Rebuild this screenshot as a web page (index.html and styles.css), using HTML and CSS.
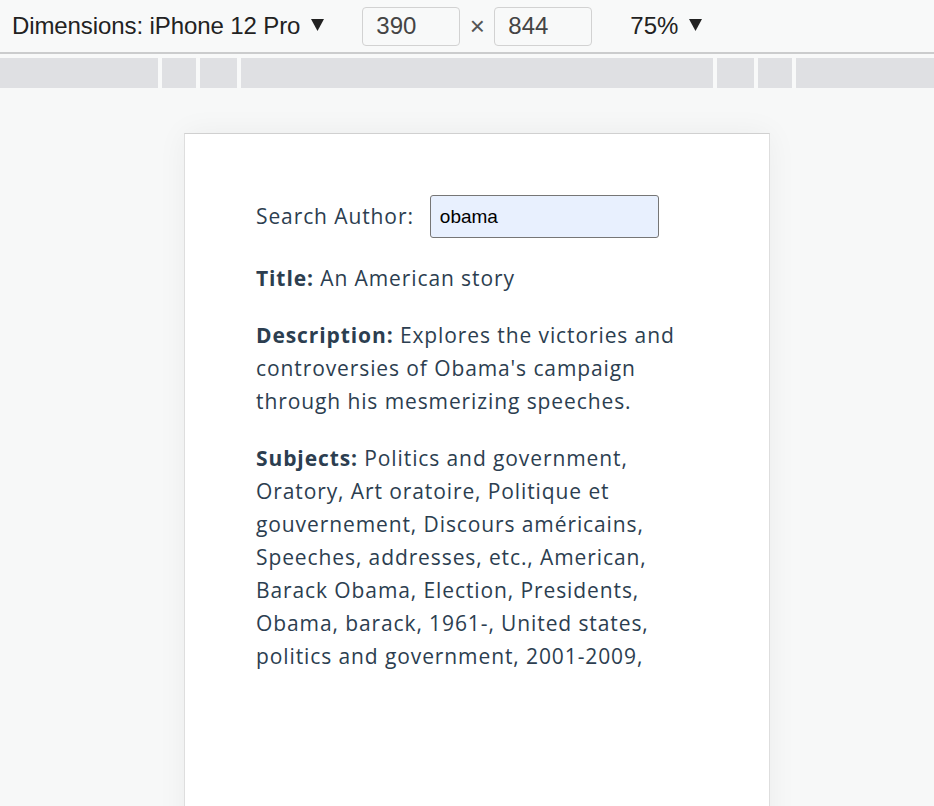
FILE: index.html
```html
<!DOCTYPE html>
<html lang="en">
<head>
<meta charset="utf-8">
<title>Book search</title>
<link rel="stylesheet" href="styles.css">
</head>
<body>
<div class="devtools">
  <div class="toolbar">
    <span class="device-name">Dimensions: iPhone 12 Pro</span>
    <svg class="caret" width="13" height="12" viewBox="0 0 13 12"><path d="M0 0H13L6.5 12Z" fill="#222"/></svg>
    <span class="dim-box">390</span>
    <span class="times">×</span>
    <span class="dim-box">844</span>
    <span class="zoom">75%</span>
    <svg class="caret" width="13" height="12" viewBox="0 0 13 12"><path d="M0 0H13L6.5 12Z" fill="#222"/></svg>
  </div>
  <div class="ruler">
    <span class="seg s1"></span>
    <span class="seg s2"></span>
    <span class="seg s3"></span>
    <span class="seg s4"></span>
    <span class="seg s5"></span>
    <span class="seg s6"></span>
    <span class="seg s7"></span>
  </div>
</div>
<div class="viewport">
  <div class="phone">
    <div class="app">
      <div class="search-row">
        <label for="author">Search Author:</label>
        <input id="author" class="search-input" type="text" value="obama">
      </div>
      <p><b>Title:</b> An American story</p>
      <p><b>Description:</b> Explores the victories and controversies of Obama's campaign through his mesmerizing speeches.</p>
      <p><b>Subjects:</b> Politics and government, Oratory, Art oratoire, Politique et gouvernement, Discours américains, Speeches, addresses, etc., American, Barack Obama, Election, Presidents, Obama, barack, 1961-, United states, politics and government, 2001-2009,</p>
    </div>
  </div>
</div>
</body>
</html>
```
FILE: styles.css
```css
html, body {
  margin: 0;
  padding: 0;
  height: 100%;
  overflow: hidden;
}
body {
  background: #f7f8f8;
  font-family: "Liberation Sans", Arial, sans-serif;
}
.devtools {
  background: #f8f9f9;
}
.toolbar {
  height: 54px;
  display: flex;
  align-items: center;
  padding-left: 12px;
  box-sizing: border-box;
  border-bottom: 2px solid #cbcccd;
  color: #222;
  font-size: 24px;
}
.device-name {
  letter-spacing: -0.1px;
}
.caret {
  margin-left: 11px;
  margin-top: -2px;
}
.dim-box {
  width: 98px;
  height: 39px;
  box-sizing: border-box;
  border: 1px solid #d2d2d2;
  border-radius: 4px;
  padding-left: 13px;
  display: flex;
  align-items: center;
  color: #444;
  margin-left: 38px;
}
.times {
  color: #555;
  width: 34px;
  text-align: center;
  font-size: 26px;
}
.times + .dim-box {
  margin-left: 0;
}
.zoom {
  margin-left: 38px;
}
.ruler {
  display: flex;
  gap: 4px;
  margin-top: 4px;
  height: 30px;
  background: #f8f9f9;
}
.seg {
  background: #dfe0e3;
  height: 30px;
}
.s1 { width: 158px; }
.s2 { width: 34px; }
.s3 { width: 37px; }
.s4 { width: 472px; }
.s5 { width: 37px; }
.s6 { width: 34px; }
.s7 { flex: 1; }
.viewport {
  display: flex;
  justify-content: center;
  padding: 45px 0 0 20px;
}
.phone {
  width: 586px;
  height: 760px;
  box-sizing: border-box;
  background: #fff;
  border: 1px solid #dedede;
  border-top-color: #d0d0d0;
  box-shadow: 0 0 28px rgba(0, 0, 0, 0.05);
}
.app {
  padding: 61px 71px 0 71px;
  font-family: "Open Sans", "Lato", sans-serif;
  color: #2c3e50;
  font-size: 21px;
  letter-spacing: 0.9px;
  line-height: 33px;
}
.search-row {
  display: flex;
  align-items: center;
  gap: 16px;
  margin-bottom: 24px;
}
.search-input {
  width: 229px;
  height: 43px;
  box-sizing: border-box;
  border: 1px solid #767676;
  border-radius: 3px;
  background: #e8f0fe;
  font-family: "Liberation Sans", Arial, sans-serif;
  font-size: 19px;
  letter-spacing: 0;
  color: #000;
  padding: 0 9px;
  margin: 0;
}
.app p {
  margin: 0 0 24px 0;
}
.app b {
  font-weight: 700;
}
```
